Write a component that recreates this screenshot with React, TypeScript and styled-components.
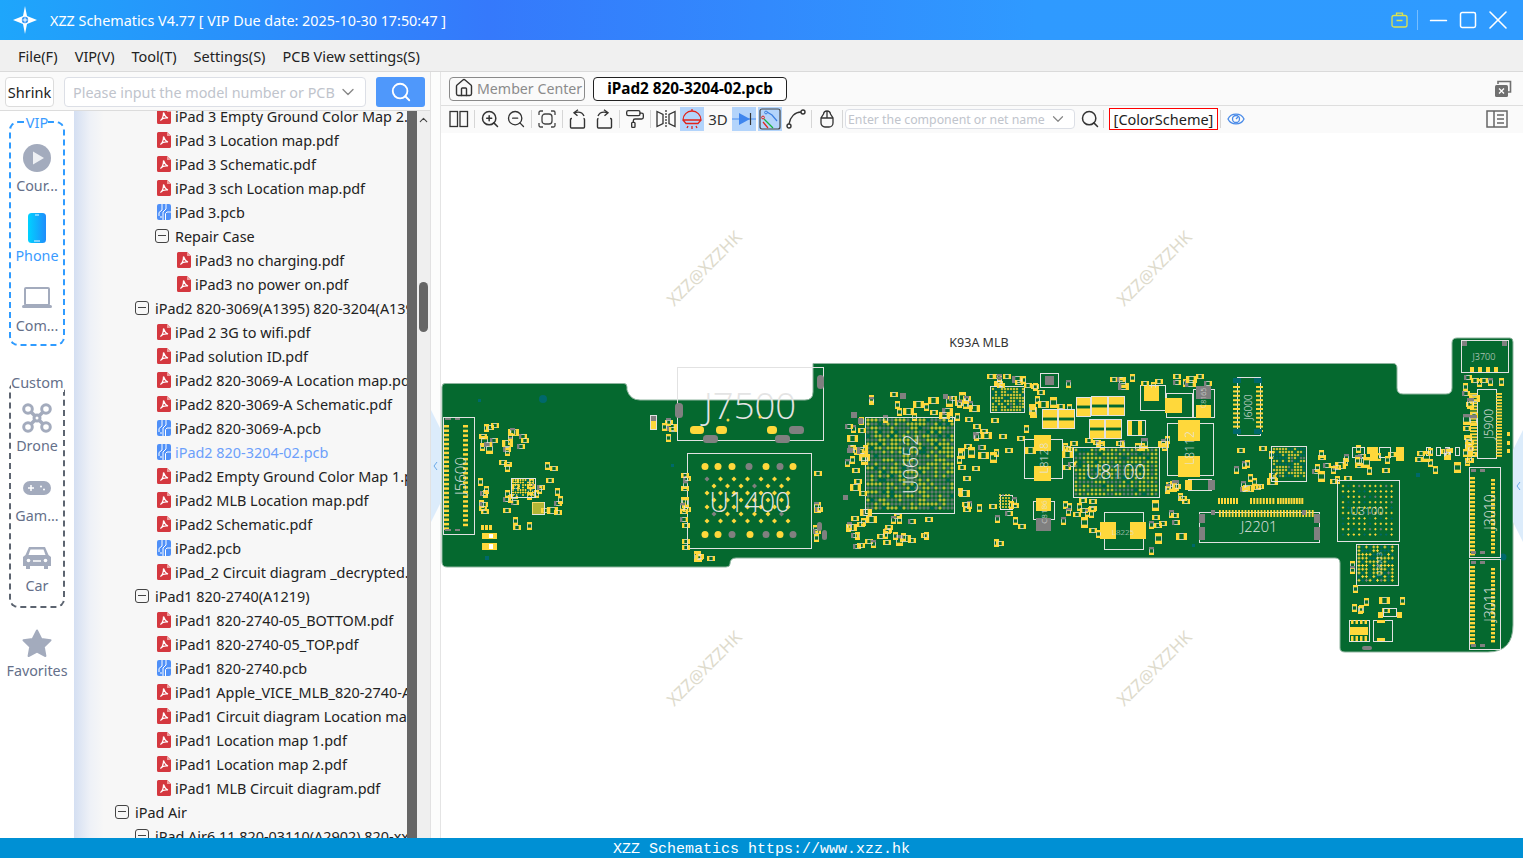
import React from 'react';
import styled, { createGlobalStyle } from 'styled-components';
import { ChevronDown, ChevronUp, House, Minus, Search, Square, X, ZoomIn, ZoomOut, PaintRoller } from 'lucide-react';

const UI_FONT = '"Noto Sans", "Noto Sans CJK SC", sans-serif';

const GlobalStyle = createGlobalStyle`
  html, body { margin: 0; height: 100%; overflow: hidden; }
  body { font-family: ${UI_FONT}; color: #222; background: #fff; }
  * { box-sizing: border-box; }
`;

const Page = styled.div`
  width: 100vw;
  height: 100vh;
  display: flex;
  flex-direction: column;
  overflow: hidden;
`;

/* title bar */
const TitleBar = styled.header`
  height: 40px;
  flex: none;
  display: flex;
  align-items: center;
  padding-left: 12px;
  color: #fff;
  background: linear-gradient(90deg, #1ea6fb 0%, #3579fb 32%, #2f9aff 68%, #2f9bff 100%);
`;
const TitleText = styled.div`
  margin-left: 12px;
  font-size: 14.35px;
  white-space: nowrap;
`;
const WindowControls = styled.div`
  margin-left: auto;
  display: flex;
  align-items: center;
  padding-right: 10px;
`;
const WindowDivider = styled.span`
  width: 1px;
  height: 20px;
  margin: 0 5px 0 9px;
  background: rgba(255, 255, 255, 0.35);
`;
const WindowButton = styled.span`
  width: 30px;
  display: flex;
  justify-content: center;
  svg { flex: none; }
`;

/* menu */
const MenuBar = styled.nav`
  height: 32px;
  flex: none;
  display: flex;
  align-items: center;
  gap: 17px;
  padding: 1px 0 0 18px;
  background: #f0f0f0;
  border-bottom: 1px solid #dadada;
  font-size: 14.5px;
`;
const MenuItem = styled.span`
  white-space: nowrap;
`;

const Body = styled.div`
  flex: 1;
  min-height: 0;
  display: flex;
`;

/* left panel */
const LeftPanel = styled.aside`
  width: 431px;
  flex: none;
  display: flex;
  flex-direction: column;
  border-right: 1px solid #e2e2e2;
  background: #fff;
`;
const SearchRow = styled.div`
  height: 39px;
  flex: none;
  display: flex;
  align-items: flex-start;
  padding: 5px 0 0 5px;
  background: #fafafa;
  border-bottom: 1px solid #dcdcdc;
`;
const ShrinkButton = styled.div`
  width: 49px;
  height: 30px;
  border: 1px solid #dcdcdc;
  border-radius: 4px;
  background: #fff;
  font-size: 14.5px;
  line-height: 28px;
  text-align: center;
`;
const Combo = styled.div<{ $w: number; $h: number; $size: number }>`
  width: ${(p) => p.$w}px;
  height: ${(p) => p.$h}px;
  flex: none;
  display: flex;
  align-items: center;
  justify-content: space-between;
  padding: 0 7px 0 ${(p) => (p.$size > 13 ? 8 : 2)}px;
  border: 1px solid #dcdfe6;
  border-radius: 4px;
  background: #fff;
  color: #c0c4cc;
  font-size: ${(p) => p.$size}px;
  white-space: nowrap;
  overflow: hidden;
`;
const SearchCombo = styled(Combo)`
  margin-left: 10px;
`;
const SearchButton = styled.div`
  width: 49px;
  height: 30px;
  margin-left: 10px;
  display: flex;
  align-items: center;
  justify-content: center;
  border-radius: 3px;
  background: #4f98fb;
`;
const PanelBody = styled.div`
  flex: 1;
  min-height: 0;
  display: flex;
`;

/* category rail */
const Rail = styled.div`
  width: 74px;
  flex: none;
  padding: 1px 0 0 9px;
  background: #fff;
`;
const RailGroup = styled.fieldset<{ $color: string; $h: number; $gap: number }>`
  width: 56px;
  min-width: 0;
  height: ${(p) => p.$h}px;
  margin: 0 0 ${(p) => p.$gap}px;
  padding: 0;
  border: 2px dashed ${(p) => p.$color};
  border-radius: 9px;
`;
const RailLegend = styled.legend<{ $color: string }>`
  margin: 0 auto;
  padding: 0;
  font-size: 14.5px;
  line-height: 20px;
  color: ${(p) => p.$color};
`;
const RailItem = styled.div<{ $active?: boolean }>`
  height: 70px;
  width: 52px;
  padding-bottom: 6px;
  display: flex;
  flex-direction: column;
  align-items: center;
  justify-content: flex-end;
  color: ${(p) => (p.$active ? '#3a9bff' : '#65708a')};
  font-size: 14.3px;
  line-height: 20px;
  white-space: nowrap;
`;
const RailIcon = styled.div`
  height: 34px;
  margin-bottom: 1px;
  display: flex;
  align-items: center;
  justify-content: center;
`;
const FavoriteItem = styled(RailItem)`
  width: 56px;
  margin-top: -18px;
`;

/* file tree */
const Tree = styled.div`
  flex: 1;
  min-width: 0;
  overflow: hidden;
  background: linear-gradient(90deg, #d4dff2 0, #eef1f7 16px, #f7f7f7 30px);
`;
const TreeInner = styled.div`
  margin-top: -7px;
`;
const Row = styled.div<{ $pad: number; $selected?: boolean }>`
  height: 24px;
  display: flex;
  align-items: center;
  padding-left: ${(p) => p.$pad}px;
  color: ${(p) => (p.$selected ? '#6c9ffb' : '#222')};
  font-size: 14.42px;
  white-space: nowrap;
`;
const FileIconBox = styled.span`
  width: 14px;
  height: 16px;
  margin-right: 4px;
  flex: none;
  display: flex;
`;
const Collapse = styled.span`
  width: 14px;
  height: 14px;
  margin-right: 6px;
  flex: none;
  position: relative;
  border: 1px solid #444;
  border-radius: 3px;
  &::after {
    content: '';
    position: absolute;
    left: 2px;
    right: 2px;
    top: 5px;
    height: 1px;
    background: #444;
  }
`;
const HandleBar = styled.div`
  width: 10px;
  flex: none;
  background: #666;
`;
const ScrollTrack = styled.div`
  width: 13px;
  flex: none;
  position: relative;
  background: #efefef;
  display: flex;
  justify-content: center;
  padding-top: 2px;
`;
const ScrollThumb = styled.div`
  position: absolute;
  top: 171px;
  left: 2px;
  width: 9px;
  height: 50px;
  border-radius: 5px;
  background: #666;
`;

const Splitter = styled.div`
  width: 10px;
  flex: none;
  position: relative;
  background: #fcfdfc;
  border-right: 1px solid #e4e4e4;
`;
const SideHandle = styled.div<{ $right?: boolean }>`
  position: absolute;
  top: ${(p) => (p.$right ? 297 : 338)}px;
  ${(p) => (p.$right ? 'right: 0;' : 'left: 0;')}
  width: 10px;
  height: 112px;
  display: flex;
  align-items: center;
  justify-content: center;
`;

/* main view */
const Main = styled.main`
  flex: 1;
  min-width: 0;
  display: flex;
  flex-direction: column;
  background: #fff;
`;
const TabBar = styled.div`
  height: 34px;
  flex: none;
  display: flex;
  align-items: flex-start;
  gap: 8px;
  padding: 5px 11px 0 8px;
  background: #fafafa;
  border-bottom: 1px solid #dedede;
`;
const Tab = styled.div<{ $active?: boolean }>`
  height: 24px;
  padding-bottom: 2px;
  display: flex;
  align-items: center;
  justify-content: ${(p) => (p.$active ? 'center' : 'flex-start')};
  width: ${(p) => (p.$active ? 194 : 136)}px;
  padding-left: ${(p) => (p.$active ? 0 : 4)}px;
  border: 1px solid ${(p) => (p.$active ? '#222' : '#8a8a8a')};
  border-radius: 4px;
  background: ${(p) => (p.$active ? '#fff' : '#fafafa')};
  color: ${(p) => (p.$active ? '#000' : '#8b8b8b')};
  font-size: ${(p) => (p.$active ? 15.3 : 14.2)}px;
  font-weight: ${(p) => (p.$active ? 700 : 400)};
  white-space: nowrap;
`;
const TabIcon = styled.span`
  margin-right: 3px;
  color: #333;
  display: flex;
`;
const CloseAll = styled.span`
  margin-left: auto;
  margin-top: 3px;
  display: flex;
`;
const Toolbar = styled.div`
  height: 27px;
  flex: none;
  display: flex;
  align-items: center;
  padding: 0 0 1px 5px;
  background: #fafafa;
`;
const ToolButton = styled.span<{ $on?: boolean }>`
  width: 24px;
  height: 24px;
  margin: 0 1px;
  flex: none;
  display: flex;
  align-items: center;
  justify-content: center;
  background: ${(p) => (p.$on ? '#b3d4fb' : 'transparent')};
  color: #333;
  font-size: 15px;
`;
const NetSearch = styled(ToolButton)`
  margin: 0 -1px 0 3px;
`;
const ToolDivider = styled.span`
  width: 1px;
  height: 18px;
  margin: 0 2px;
  flex: none;
  background: #d6d6d6;
`;
const ColorScheme = styled.div`
  width: 109px;
  height: 22px;
  margin-left: 3px;
  flex: none;
  border: 1px solid #f00;
  background: #fff;
  color: #222;
  font-size: 14.5px;
  line-height: 20px;
  text-align: center;
  white-space: nowrap;
`;
const ToolEnd = styled.span`
  margin-left: auto;
  margin-right: 15px;
  display: flex;
`;
const Canvas = styled.div`
  flex: 1;
  min-height: 0;
  position: relative;
  overflow: hidden;
  background: #fff;
`;
const BoardSvg = styled.svg`
  display: block;
  width: 100%;
  height: 100%;
`;

const Footer = styled.footer`
  height: 20px;
  flex: none;
  overflow: hidden;
  background: #0090d4;
  color: #fff;
  font-family: "Liberation Mono", "DejaVu Sans Mono", monospace;
  font-size: 15px;
  line-height: 23px;
  text-align: center;
  white-space: nowrap;
`;

/* ---------- icons ---------- */
const Logo = () => (
  <svg width="26" height="30" viewBox="0 0 26 30">
    <path d="M13 1 L15 11 L25 15 L15 19 L13 29 L11 19 L1 15 L11 11 Z" fill="#fff" />
    <circle cx="13" cy="15" r="3.2" fill="#3596f5" />
    <path d="M13 12.5v5M10.5 15h5" stroke="#fff" strokeWidth="1" />
  </svg>
);
const Bag = () => (
  <svg width="17" height="16" viewBox="0 0 17 16" fill="none" stroke="#dde24c" strokeWidth="1.3">
    <rect x="1" y="3.5" width="15" height="11.5" rx="2" />
    <path d="M5.5 3.5V1.2h6v2.3M5.5 8.5h6" />
  </svg>
);
const PdfIcon = () => (
  <svg width="14" height="16" viewBox="0 0 14 16">
    <path d="M1.5 0H10l4 4v10.5a1.5 1.5 0 0 1-1.5 1.5H1.5A1.5 1.5 0 0 1 0 14.5V1.5A1.5 1.5 0 0 1 1.5 0Z" fill="#d4383f" />
    <path d="M10 0l4 4h-4Z" fill="#f0a0a0" />
    <path d="M6.5 4.5c1 3 2 4.5 4.5 5.5-3-.5-5.5 0-7.5 2.5 2-1.5 3-4.5 3-8Z" fill="none" stroke="#fff" strokeWidth="1.2" />
  </svg>
);
const PcbIcon = () => (
  <svg width="14" height="16" viewBox="0 0 14 16">
    <rect width="14" height="16" rx="2" fill="#4f90f8" />
    <path d="M5 0v6L2 8.5V12M9 0v5l-3 3v8M14 8h-4L8.5 9.5V16M3 13h2" fill="none" stroke="#fff" strokeWidth="1" />
  </svg>
);
const PlayIcon = () => (
  <svg width="30" height="30" viewBox="0 0 30 30">
    <circle cx="15" cy="15" r="14" fill="#a3abbd" />
    <path d="M11 8.5 L22 15 L11 21.5 Z" fill="#eef0f4" />
  </svg>
);
const PhoneIcon = () => (
  <svg width="18" height="30" viewBox="0 0 18 30">
    <defs>
      <linearGradient id="ph" x1="0" x2="1" y1="0" y2="0">
        <stop offset="0" stopColor="#00d2ff" />
        <stop offset="1" stopColor="#1f8dfb" />
      </linearGradient>
    </defs>
    <rect width="18" height="30" rx="3.5" fill="url(#ph)" />
    <path d="M7 2h4M6 28h6" stroke="#e6f8ff" strokeWidth="1" />
  </svg>
);
const LaptopIcon = () => (
  <svg width="32" height="22" viewBox="0 0 32 22" fill="none">
    <rect x="4" y="1" width="24" height="17" rx="1" stroke="#a3abbd" strokeWidth="2" />
    <rect x="1" y="18" width="30" height="3" rx="1.5" fill="#a3abbd" />
  </svg>
);
const DroneIcon = () => (
  <svg width="30" height="30" viewBox="0 0 30 30" fill="none" stroke="#a3abbd">
    <circle cx="6" cy="6" r="4.3" strokeWidth="3" />
    <circle cx="24" cy="6" r="4.3" strokeWidth="3" />
    <circle cx="6" cy="24" r="4.3" strokeWidth="3" />
    <circle cx="24" cy="24" r="4.3" strokeWidth="3" />
    <path d="M9 9l12 12M21 9L9 21" strokeWidth="3.5" />
    <circle cx="15" cy="15" r="4.5" fill="#a3abbd" stroke="none" />
    <circle cx="15" cy="15" r="1.5" fill="#fff" stroke="none" />
  </svg>
);
const GameIcon = () => (
  <svg width="28" height="14" viewBox="0 0 28 14">
    <rect width="28" height="14" rx="7" fill="#a3abbd" />
    <path d="M5 7h6M8 4v6" stroke="#fff" strokeWidth="1.5" />
    <circle cx="18" cy="5.5" r="1" fill="#fff" />
    <circle cx="21" cy="8.5" r="1" fill="#fff" />
  </svg>
);
const CarIcon = () => (
  <svg width="28" height="24" viewBox="0 0 28 24">
    <path d="M6 1h16l3.5 8 2.5 2v9h-3v3h-4v-3H7v3H3v-3H0v-9l2.5-2Z" fill="#a3abbd" />
    <path d="M7.5 3.5h13l2 5.5h-17Z" fill="#fff" />
    <circle cx="5.5" cy="14.5" r="1.8" fill="#fff" />
    <circle cx="22.5" cy="14.5" r="1.8" fill="#fff" />
    <path d="M10 15h8" stroke="#fff" strokeWidth="1.5" />
  </svg>
);
const StarIcon = () => (
  <svg width="30" height="29" viewBox="0 0 30 29">
    <path d="M15 1.5 L19.3 10 L28.5 11.3 L21.8 17.8 L23.4 27 L15 22.7 L6.6 27 L8.2 17.8 L1.5 11.3 L10.7 10 Z" fill="#a3abbd" stroke="#a3abbd" strokeWidth="2" strokeLinejoin="round" />
  </svg>
);
const PanesIcon = () => (
  <svg width="20" height="18" viewBox="0 0 20 18" fill="none" stroke="#333" strokeWidth="1.3">
    <rect x="1" y="1.5" width="7.5" height="15" />
    <rect x="11" y="1.5" width="7.5" height="15" />
  </svg>
);
const FitIcon = () => (
  <svg width="18" height="18" viewBox="0 0 18 18" fill="none" stroke="#444" strokeWidth="1.3">
    <path d="M1 5V2.5A1.5 1.5 0 0 1 2.5 1H5M13 1h2.5A1.5 1.5 0 0 1 17 2.5V5M17 13v2.5a1.5 1.5 0 0 1-1.5 1.5H13M5 17H2.5A1.5 1.5 0 0 1 1 15.5V13" />
    <rect x="4" y="4" width="10" height="10" rx="3" />
  </svg>
);
const RotateIcon = ({ flip }: { flip?: boolean }) => (
  <svg width="18" height="20" viewBox="0 0 18 20" fill="none" stroke="#333" strokeWidth="1.4" style={flip ? { transform: 'scaleX(-1)' } : undefined}>
    <path d="M3 9.5H2.5A1 1 0 0 0 1.5 10.5V18A1 1 0 0 0 2.5 19H14.5A1 1 0 0 0 15.5 18V10.500A1 1 0 0 0 14.5 9.500" />
    <path d="M15 7C13.5 3.5 10 2.5 6 3.500" />
    <path d="M9 .8L5 3.8 8.500 6.800" />
  </svg>
);
const MirrorIcon = () => (
  <svg width="20" height="18" viewBox="0 0 20 18" fill="none" stroke="#333" strokeWidth="1.3">
    <path d="M1 1.5l6 3v9l-6 3ZM19 1.5l-6 3v9l6 3Z" />
    <path d="M10 0v18" strokeDasharray="2 1" />
  </svg>
);
const LampIcon = () => (
  <svg width="22" height="22" viewBox="0 0 22 22" fill="none" stroke="#e2231a" strokeWidth="1.3">
    <path d="M2 12a9 9 0 0 1 18 0ZM2 12l3 3.5h12l3-3.5" />
    <path d="M11 1v2M7 18l-1 2M11 18v3M15 18l1 2" />
  </svg>
);
const DiodeIcon = () => (
  <svg width="24" height="16" viewBox="0 0 24 16">
    <path d="M0 8h24" stroke="#4a8ff0" strokeWidth="1" />
    <path d="M7 2l11 6-11 6Z" fill="#3f86ee" />
    <path d="M18.5 2v12" stroke="#333" strokeWidth="1.2" />
  </svg>
);
const NetIcon = () => (
  <svg width="22" height="22" viewBox="0 0 22 22" fill="none">
    <rect x="1" y="1" width="20" height="20" rx="2" stroke="#444" strokeWidth="1.2" />
    <path d="M8 4l5 3 5 6" stroke="#3c7fe0" strokeWidth="1.2" />
    <circle cx="7" cy="4.5" r="1.4" stroke="#3c7fe0" />
    <path d="M5 11l9 9" stroke="#19b23a" strokeWidth="1.3" />
    <circle cx="4" cy="9.5" r="1.4" stroke="#e2231a" />
    <path d="M4 14l5 6" stroke="#e2231a" strokeWidth="1.2" />
  </svg>
);
const CurveIcon = () => (
  <svg width="20" height="20" viewBox="0 0 20 20" fill="none" stroke="#333" strokeWidth="1.4">
    <circle cx="3" cy="17" r="2" />
    <circle cx="17" cy="3" r="2" />
    <path d="M3 15C4 8 9 3 15 3" />
  </svg>
);
const MouseIcon = () => (
  <svg width="14" height="18" viewBox="0 0 14 18" fill="none" stroke="#333" strokeWidth="1.3">
    <path d="M3.5 4A3.500 3.500 0 0 1 7 1a3.500 3.500 0 0 1 3.500 3L13 8v5a4 4 0 0 1-4 4H5a4 4 0 0 1-4-4V8Z" />
    <path d="M1 8h12M7 1v7" />
  </svg>
);
const EyeIcon = () => (
  <svg width="18" height="14" viewBox="0 0 18 14" fill="none" stroke="#4a8be8" strokeWidth="1.3">
    <path d="M1 7c3-6.500 13-6.500 16 0-3 6.500-13 6.500-16 0Z" />
    <circle cx="9" cy="7" r="3.5" />
    <path d="M9 7l2-2" />
  </svg>
);
const SidePanelIcon = () => (
  <svg width="22" height="18" viewBox="0 0 22 18" fill="none" stroke="#666" strokeWidth="1.5">
    <rect x="1" y="1" width="20" height="16" />
    <path d="M8 1v16M11 5h7M11 9h7M11 13h7" />
  </svg>
);
const CloseAllIcon = () => (
  <svg width="18" height="18" viewBox="0 0 18 18">
    <path d="M4 4V1.5h12.5V12H14" fill="none" stroke="#707070" strokeWidth="1.6" />
    <rect x="1" y="5" width="13" height="12" rx="1.5" fill="#707070" />
    <path d="M5 8.5l5 5M10 8.5l-5 5" stroke="#fff" strokeWidth="1.3" />
  </svg>
);

/* ---------- tree data ---------- */
type TreeRow = { t: string; k: 'pdf' | 'pcb' | 'dir'; l: number; sel?: boolean };
const pdf = (t: string, l = 2): TreeRow => ({ t, k: 'pdf', l });
const pcb = (t: string, sel?: boolean): TreeRow => ({ t, k: 'pcb', l: 2, sel });
const dir = (t: string, l: number): TreeRow => ({ t, k: 'dir', l });

const rows: TreeRow[] = [
  pdf('iPad 3 Empty Ground Color Map 2.pdf'),
  pdf('iPad 3 Location map.pdf'),
  pdf('iPad 3 Schematic.pdf'),
  pdf('iPad 3 sch Location map.pdf'),
  pcb('iPad 3.pcb'),
  dir('Repair Case', 2),
  pdf('iPad3 no charging.pdf', 3),
  pdf('iPad3 no power on.pdf', 3),
  dir('iPad2 820-3069(A1395) 820-3204(A1396)', 1),
  pdf('iPad 2 3G to wifi.pdf'),
  pdf('iPad solution ID.pdf'),
  pdf('iPad2 820-3069-A Location map.pdf'),
  pdf('iPad2 820-3069-A Schematic.pdf'),
  pcb('iPad2 820-3069-A.pcb'),
  pcb('iPad2 820-3204-02.pcb', true),
  pdf('iPad2 Empty Ground Color Map 1.pdf'),
  pdf('iPad2 MLB Location map.pdf'),
  pdf('iPad2 Schematic.pdf'),
  pcb('iPad2.pcb'),
  pdf('iPad_2 Circuit diagram _decrypted.pdf'),
  dir('iPad1 820-2740(A1219)', 1),
  pdf('iPad1 820-2740-05_BOTTOM.pdf'),
  pdf('iPad1 820-2740-05_TOP.pdf'),
  pcb('iPad1 820-2740.pcb'),
  pdf('iPad1 Apple_VICE_MLB_820-2740-A.pdf'),
  pdf('iPad1 Circuit diagram Location map.pdf'),
  pdf('iPad1 Location map 1.pdf'),
  pdf('iPad1 Location map 2.pdf'),
  pdf('iPad1 MLB Circuit diagram.pdf'),
  dir('iPad Air', 0),
  dir('iPad Air6 11 820-03110(A2902) 820-xxxxx', 1),
];

/* ---------- board drawing ---------- */
const GREEN = '#05692f';
const YEL = '#ffd83b';
const GRY = '#808080';
const TEAL = '#00686b';
const LINE = '#e2e2e2';

const rng = (seed: number) => () => {
  seed = (seed * 1664525 + 1013904223) % 4294967296;
  return seed / 4294967296;
};

type R = [number, number, number, number];
const rects = (list: R[], fill: string, rx = 0) =>
  list.map(([x, y, w, h], i) => <rect key={i} x={x} y={y} width={w} height={h} rx={rx} fill={fill} />);
const boxes = (list: R[]) =>
  list.map(([x, y, w, h], i) => <rect key={i} x={x + 0.5} y={y + 0.5} width={w} height={h} fill="none" stroke={LINE} strokeWidth="1" />);

// pads in a line, same size
const padLine = (x: number, y: number, n: number, dx: number, dy: number, w: number, h: number): R[] =>
  Array.from({ length: n }, (_, i) => [x + i * dx, y + i * dy, w, h] as R);

// scattered two-pad parts inside a region
const cluster = (x0: number, y0: number, x1: number, y1: number, n: number, seed: number) => {
  const r = rng(seed);
  const out: React.ReactNode[] = [];
  for (let i = 0; i < n; i++) {
    const x = Math.round(x0 + r() * (x1 - x0));
    const y = Math.round(y0 + r() * (y1 - y0));
    const big = r() > 0.8;
    const w = big ? 10 : 7;
    const h = big ? 6 : 4;
    const vert = r() > 0.55;
    const gray = r() > 0.75;
    const W = vert ? h : w;
    const H = vert ? w : h;
    out.push(
      <g key={i}>
        <rect x={x + 0.5} y={y + 0.5} width={W} height={H} fill="none" stroke={LINE} strokeWidth="0.8" />
        <rect x={x} y={y} width={vert ? W + 1 : W / 3} height={vert ? H / 3 : H + 1} fill={gray ? GRY : YEL} />
        <rect
          x={vert ? x : x + W - W / 3 + 1}
          y={vert ? y + H - H / 3 + 1 : y}
          width={vert ? W + 1 : W / 3}
          height={vert ? H / 3 : H + 1}
          fill={YEL}
        />
      </g>
    );
  }
  return out;
};

// ball grid drawn as small crosses
const grid = (x0: number, y0: number, x1: number, y1: number, p: number, arm: number, mix: [number, number], seed: number) => {
  const r = rng(seed);
  const paths: Record<string, string> = { y: '', g: '', t: '' };
  for (let y = y0; y <= y1; y += p) {
    for (let x = x0; x <= x1; x += p) {
      const v = r();
      const k = v < mix[0] ? 'y' : v < mix[0] + mix[1] ? 'g' : 't';
      paths[k] += `M${x - arm} ${y}h${arm * 2}M${x} ${y - arm}v${arm * 2}`;
    }
  }
  return (
    <g fill="none" strokeWidth="1">
      <path d={paths.y} stroke={YEL} />
      <path d={paths.g} stroke={GRY} />
      <path d={paths.t} stroke={TEAL} />
    </g>
  );
};

// two-tone block part: outline, yellow ends and green band in the middle
const blockPart = ([x, y, w, h]: R, key: number) => (
  <g key={key}>
    <rect x={x} y={y} width={w} height={h} fill={YEL} />
    <rect x={x} y={y + h * 0.42} width={w} height={h * 0.16} fill={GREEN} />
    <rect x={x - 0.5} y={y - 0.5} width={w + 1} height={h + 1} fill="none" stroke={LINE} />
  </g>
);

const BOARD_PATH =
  'M445 383.5H624Q627 383.5 627 387V390Q630 400 640 400H805Q813 400 813 392V363.5H1393Q1397 363.5 1397 368V388Q1397 394 1403 394H1446Q1452 394 1452 388V343Q1452 338 1457 338H1510Q1513 338 1513 342V625Q1513 652 1488 652H1345Q1340 652 1340 648V563Q1340 558 1335 558H736Q730 558 730 564Q730 567 726 567H447Q442 567 442 562V387Q442 383.5 445 383.5Z';

const labelStyle = { fontFamily: '"Open Sans", "Noto Sans", sans-serif', fill: '#e4e4e4', fontWeight: 300 } as const;

const Label = ({ x, y, size, rot, children }: { x: number; y: number; size: number; rot?: boolean; children: string }) => (
  <text
    x={x}
    y={y}
    fontSize={size}
    textAnchor="middle"
    dominantBaseline="central"
    transform={rot ? `rotate(-90 ${x} ${y})` : undefined}
    style={labelStyle}
  >
    {children}
  </text>
);

const Watermark = ({ x, y }: { x: number; y: number }) => (
  <text
    x={x}
    y={y}
    fontSize="17"
    textAnchor="middle"
    dominantBaseline="central"
    fill="#dedbcc"
    transform={`rotate(-45 ${x} ${y})`}
    style={{ fontFamily: '"Noto Sans", sans-serif' }}
  >
    XZZ@XZZHK
  </text>
);

const u1400Balls = () => {
  const big: [number, number, string][] = [];
  [705, 718, 732, 749, 766, 780, 793].forEach((x, i) => {
    big.push([x, 466.5, i === 3 || i === 5 ? GRY : YEL]);
    big.push([x + (i === 3 ? 1 : 0), 534.5, i === 2 || i === 4 || i === 6 ? GRY : YEL]);
  });
  const small: React.ReactNode[] = [];
  for (let row = 0; row < 7; row++) {
    const y = 479 + row * 7;
    const off = row % 2 ? 7 : 0;
    for (let c = 0; c < (row % 2 ? 6 : 7); c++) {
      const x = 707 + off + c * 13.5;
      const g = (row === 1 && c === 3) || (row === 0 && c === 0) || (row === 5 && c === 0) || (row === 5 && c === 5);
      small.push(<path key={`${row}-${c}`} d={`M${x} ${y - 2.5}L${x + 2.5} ${y}L${x} ${y + 2.5}L${x - 2.5} ${y}Z`} fill={g ? GRY : YEL} />);
    }
  }
  return (
    <>
      {big.map(([x, y, c], i) => (
        <circle key={i} cx={x} cy={y} r="3.5" fill={c} />
      ))}
      {small}
    </>
  );
};

const Board = () => (
  <BoardSvg viewBox="441 133 1082 705" preserveAspectRatio="xMinYMin meet">
    <Watermark x={704} y={268} />
    <Watermark x={1154} y={268} />
    <Watermark x={704} y={668} />
    <Watermark x={1154} y={668} />
    <text x="979" y="347" fontSize="12.5" textAnchor="middle" fill="#333" style={{ fontFamily: UI_FONT }}>
      K93A MLB
    </text>

    <path d={BOARD_PATH} fill={GREEN} stroke="#8fb59f" strokeWidth="1" />

    {/* vias */}
    <circle cx="543" cy="399" r="4" fill={TEAL} />
    {rects([[478, 399, 3, 3], [671, 464, 3, 3], [485, 556, 4, 4], [1192, 544, 3, 3], [1416, 473, 4, 4]], TEAL)}
    <circle cx="1503" cy="557" r="3.5" fill={TEAL} />

    {/* J5600 */}
    {boxes([[443, 417, 31, 117]])}
    {rects(padLine(444, 425, 24, 0, 4.45, 5, 2.5), YEL)}
    {rects(padLine(463, 425, 22, 0, 4.7, 5, 2.5), YEL)}
    {rects([[445, 418, 6, 2], [455, 418, 5, 2], [445, 529, 6, 2], [455, 529, 5, 2]], GRY)}
    <Label x={460} y={476} size={15} rot>J5600</Label>

    {/* cluster around J5600 */}
    {cluster(478, 418, 492, 450, 9, 3)}
    {cluster(478, 472, 484, 510, 8, 5)}
    {cluster(500, 425, 522, 450, 10, 7)}
    {cluster(495, 460, 560, 525, 30, 11)}
    {boxes([[511, 478, 24, 19], [532, 502, 12, 12]])}
    {grid(513, 480, 534, 495, 2.5, 1, [0.75, 0.05], 13)}
    {grid(533, 503, 543, 513, 2, 0.9, [0.9, 0.05], 17)}
    {rects([[482, 533, 15, 6], [482, 543, 15, 7]], YEL)}
    {rects([[489, 534, 4, 4], [489, 544, 4, 5]], '#fff')}
    {rects([[481, 525, 3, 5], [485, 525, 3, 5], [489, 525, 3, 5]], YEL)}

    {/* J7500 */}
    {boxes([[677, 367, 146, 73]])}
    <Label x={750} y={405} size={36.5}>J7500</Label>
    {rects([[817, 375, 7, 14], [675, 403, 8, 15], [703, 435, 15, 8], [775, 435, 15, 8], [789, 426, 15, 8]], GRY, 3.5)}
    {rects([[690, 426, 14, 8], [716, 426, 11, 8], [767, 426, 10, 8]], YEL, 3.5)}
    <circle cx="728" cy="420" r="1.5" fill={YEL} />
    <circle cx="760" cy="417" r="1.5" fill={YEL} />
    {rects([[651, 416, 5, 5]], GRY)}
    {rects([[650, 421, 6, 8]], YEL)}
    {boxes([[650, 415, 6, 14]])}
    {cluster(661, 416, 676, 436, 6, 21)}

    {/* U1400 */}
    {boxes([[687, 453, 124, 95]])}
    {u1400Balls()}
    <Label x={750} y={501} size={27}>U1400</Label>
    {cluster(680, 452, 684, 545, 14, 23)}
    {cluster(813, 462, 816, 536, 7, 25)}
    {cluster(693, 550, 710, 556, 5, 27)}
    {rects([[817, 522, 5, 9], [822, 530, 5, 10]], GRY, 2.5)}

    {/* U0652 */}
    {boxes([[865, 417, 89, 96]])}
    {grid(868, 420, 952, 511, 4, 1.7, [0.42, 0.5], 31)}
    <Label x={910} y={464} size={20} rot>U0652</Label>
    {cluster(845, 410, 863, 540, 26, 33)}
    {cluster(868, 390, 978, 415, 26, 35)}
    {cluster(955, 417, 985, 510, 22, 37)}
    {cluster(845, 514, 925, 545, 26, 39)}
    {rects([[851, 412, 6, 6], [858, 418, 5, 6], [847, 448, 6, 5], [843, 495, 5, 5], [900, 393, 6, 6], [943, 394, 5, 5]], GRY)}

    {/* small IC row top middle */}
    {boxes([[990, 386, 34, 26], [1040, 373, 18, 14]])}
    {grid(993, 389, 1023, 410, 3, 1.2, [0.75, 0.05], 41)}
    <rect x="1045" y="376" width="9" height="9" fill={GRY} />
    {cluster(980, 372, 1037, 384, 12, 43)}
    {cluster(1023, 380, 1078, 408, 12, 45)}
    {cluster(990, 412, 1025, 452, 8, 47)}
    {boxes([[1000, 495, 12, 14]])}
    {grid(1000, 495, 1011, 508, 3, 1, [0.7, 0.1], 49)}
    {cluster(985, 482, 1020, 545, 10, 51)}

    {/* L8128 / C8186 */}
    {boxes([[1024, 439, 38, 39], [1033, 501, 21, 18]])}
    {rects([[1034, 435, 17, 16], [1034, 466, 17, 15], [1036, 498, 15, 13]], YEL)}
    <rect x="1036" y="518" width="15" height="13" fill={GRY} />
    <Label x={1043} y={458} size={11} rot>L8128</Label>
    <Label x={1043} y={512} size={8} rot>C8186</Label>
    {cluster(1060, 440, 1072, 470, 7, 53)}
    {cluster(1056, 498, 1100, 518, 14, 55)}

    {/* power block */}
    {[[1077, 398, 13, 18], [1092, 397, 15, 18], [1109, 397, 15, 18], [1043, 410, 14, 18], [1059, 410, 15, 18], [1090, 420, 14, 18], [1106, 420, 15, 18]].map((r, i) =>
      blockPart(r as R, i)
    )}
    {boxes([[1127, 420, 18, 15], [1140, 385, 25, 25], [1166, 393, 26, 24], [1193, 389, 21, 28]])}
    {rects([[1144, 386, 15, 15], [1165, 398, 17, 15], [1196, 405, 15, 13], [1128, 421, 4, 14], [1138, 421, 4, 14]], YEL)}
    <rect x="1196" y="386" width="15" height="13" fill={GRY} />
    <Label x={1203} y={398} size={7} rot>C8165</Label>
    {cluster(1105, 372, 1160, 384, 8, 57)}
    {cluster(1172, 372, 1215, 383, 7, 59)}
    {cluster(1075, 436, 1170, 444, 14, 61)}

    {/* U8100 */}
    {boxes([[1073, 447, 86, 50]])}
    {grid(1076, 450, 1157, 495, 4, 1.4, [0.5, 0.4], 63)}
    <Label x={1116} y={471} size={20}>U8100</Label>

    {/* L8112 */}
    {boxes([[1167, 423, 46, 52]])}
    {rects([[1178, 420, 22, 21], [1178, 456, 22, 21]], YEL)}
    <Label x={1189} y={448} size={12} rot>L8112</Label>
    {boxes([[1188, 479, 23, 11]])}
    {rects([[1185, 480, 7, 10]], YEL)}
    {rects([[1208, 480, 7, 10]], GRY)}
    {cluster(1160, 478, 1182, 500, 8, 65)}

    {/* L8225 */}
    {boxes([[1104, 512, 39, 37]])}
    {rects([[1100, 522, 16, 17], [1130, 522, 16, 17]], YEL)}
    <Label x={1123} y={531} size={8}>L8225</Label>
    {cluster(1145, 495, 1180, 548, 12, 69)}
    {cluster(1085, 523, 1100, 530, 2, 71)}

    {/* J6000 */}
    {boxes([[1237, 377, 23, 58]])}
    {rects(padLine(1233, 386, 11, 0, 4.4, 7, 2), YEL)}
    {rects(padLine(1256, 386, 11, 0, 4.4, 7, 2), YEL)}
    {rects([[1233, 378, 8, 5], [1254, 378, 8, 5], [1233, 429, 8, 5], [1254, 429, 8, 5]], TEAL)}
    <Label x={1248} y={407} size={10} rot>J6000</Label>

    {/* right middle strip */}
    {cluster(1233, 445, 1270, 490, 16, 73)}
    {boxes([[1271, 446, 35, 35], [1352, 447, 12, 10], [1379, 447, 11, 10], [1426, 447, 4, 8], [1436, 447, 4, 8], [1445, 447, 4, 8], [1455, 447, 4, 8]])}
    {grid(1274, 449, 1304, 478, 3, 1.2, [0.5, 0.1], 75)}
    {cluster(1308, 446, 1345, 480, 14, 77)}
    {cluster(1350, 445, 1400, 472, 12, 79)}
    {cluster(1412, 446, 1470, 466, 14, 81)}
    {rects([[1370, 447, 8, 14], [1396, 447, 8, 14]], YEL)}

    {/* J2201 */}
    {boxes([[1199, 512, 120, 30]])}
    <Label x={1259} y={526} size={14.5}>J2201</Label>
    {rects(padLine(1219, 510, 30, 3.2, 0, 1.8, 7), YEL)}
    {rects(padLine(1218, 498, 7, 3, 0, 2, 6), YEL)}
    {rects(padLine(1250, 498, 8, 3.2, 0, 2, 6), YEL)}
    {rects(padLine(1277, 498, 10, 2.7, 0, 2, 6), YEL)}
    {rects([[1199, 514, 6, 9], [1314, 514, 6, 9], [1199, 527, 6, 13], [1314, 527, 6, 13], [1211, 510, 4, 5], [1302, 510, 4, 5]], GRY)}

    {/* U3100 */}
    {boxes([[1337, 480, 62, 61]])}
    {grid(1343, 486, 1393, 535, 5.4, 1.2, [0.72, 0.06], 83)}
    <Label x={1367} y={510} size={11}>U3100</Label>

    {/* U3003 */}
    {boxes([[1356, 544, 42, 41]])}
    {grid(1359, 547, 1396, 583, 3.7, 1.5, [0.55, 0.03], 85)}
    <Label x={1378} y={564} size={8} rot>U3003</Label>
    {cluster(1348, 555, 1355, 590, 3, 87)}
    {cluster(1350, 590, 1400, 612, 7, 89)}

    {/* bottom small parts */}
    {boxes([[1349, 620, 20, 21], [1373, 620, 19, 21], [1383, 608, 13, 8]])}
    {rects([[1350, 627, 18, 8], [1377, 620, 8, 3], [1377, 638, 8, 3], [1378, 612, 5, 6], [1397, 612, 5, 6]], YEL)}
    {rects(padLine(1351, 620, 4, 4.5, 0, 2.5, 4), YEL)}
    {rects(padLine(1351, 636, 4, 4.5, 0, 2.5, 5), YEL)}
    <rect x="1362" y="646" width="10" height="4" rx="2" fill={GRY} />

    {/* J3700 */}
    {boxes([[1461, 340, 47, 32]])}
    {rects([[1462, 341, 5, 5], [1502, 341, 5, 5]], GRY)}
    {rects(padLine(1470, 367, 4, 8, 0, 4, 5), YEL)}
    <Label x={1484} y={356} size={9}>J3700</Label>
    {cluster(1460, 375, 1502, 380, 6, 91)}

    {/* J5900 */}
    {boxes([[1477, 389, 19, 69]])}
    {rects(padLine(1470, 393, 21, 0, 3.1, 7, 1.8), YEL)}
    {rects(padLine(1496, 393, 21, 0, 3.1, 6, 1.8), YEL)}
    <Label x={1488} y={424} size={12} rot>J5900</Label>
    {cluster(1462, 382, 1470, 456, 20, 93)}
    {rects([[1507, 432, 3, 4], [1507, 441, 3, 4], [1507, 449, 3, 4]], YEL)}

    {/* J3010 / J3011 */}
    {boxes([[1469, 467, 31, 90], [1469, 559, 31, 90]])}
    {rects(padLine(1470, 477, 20, 0, 4, 5, 2.4), YEL)}
    {rects(padLine(1491, 479, 19, 0, 4, 4, 2.4), YEL)}
    {rects(padLine(1470, 566, 20, 0, 4, 5, 2.4), YEL)}
    {rects(padLine(1491, 568, 19, 0, 4, 4, 2.4), YEL)}
    {rects([[1471, 469, 5, 3], [1480, 469, 5, 3], [1471, 551, 5, 3], [1480, 551, 5, 3], [1471, 561, 5, 3], [1480, 561, 5, 3], [1471, 644, 5, 3], [1480, 644, 5, 3]], GRY)}
    <Label x={1489} y={512} size={14} rot>J3010</Label>
    <Label x={1489} y={604} size={14} rot>J3011</Label>
  </BoardSvg>
);

const App = () => (
  <Page>
    <GlobalStyle />
    <TitleBar>
      <Logo />
      <TitleText>XZZ Schematics V4.77 [ VIP Due date: 2025-10-30 17:50:47 ]</TitleText>
      <WindowControls>
        <Bag />
        <WindowDivider />
        <WindowButton><Minus size={27} strokeWidth={1.5} /></WindowButton>
        <WindowButton><Square size={20} strokeWidth={1.8} /></WindowButton>
        <WindowButton><X size={32} strokeWidth={1.2} /></WindowButton>
      </WindowControls>
    </TitleBar>
    <MenuBar>
      {['File(F)', 'VIP(V)', 'Tool(T)', 'Settings(S)', 'PCB View settings(S)'].map((m) => (
        <MenuItem key={m}>{m}</MenuItem>
      ))}
    </MenuBar>
    <Body>
      <LeftPanel>
        <SearchRow>
          <ShrinkButton>Shrink</ShrinkButton>
          <SearchCombo $w={302} $h={30} $size={14.35}>
            Please input the model number or PCB
            <ChevronDown size={20} color="#888" strokeWidth={1.6} />
          </SearchCombo>
          <SearchButton><Search size={22} color="#fff" strokeWidth={2} /></SearchButton>
        </SearchRow>
        <PanelBody>
          <Rail>
            <RailGroup $color="#2f9bff" $h={234} $gap={26}>
              <RailLegend $color="#3a9bff">VIP</RailLegend>
              <RailItem><RailIcon><PlayIcon /></RailIcon>Cour...</RailItem>
              <RailItem $active><RailIcon><PhoneIcon /></RailIcon>Phone</RailItem>
              <RailItem><RailIcon><LaptopIcon /></RailIcon>Com...</RailItem>
            </RailGroup>
            <RailGroup $color="#5c6470" $h={236} $gap={27}>
              <RailLegend $color="#65708a">Custom</RailLegend>
              <RailItem><RailIcon><DroneIcon /></RailIcon>Drone</RailItem>
              <RailItem><RailIcon><GameIcon /></RailIcon>Gam...</RailItem>
              <RailItem><RailIcon><CarIcon /></RailIcon>Car</RailItem>
            </RailGroup>
            <FavoriteItem><RailIcon><StarIcon /></RailIcon>Favorites</FavoriteItem>
          </Rail>
          <Tree>
            <TreeInner>
              {rows.map((r) =>
                r.k === 'dir' ? (
                  <Row key={r.t} $pad={41 + 20 * r.l}>
                    <Collapse />
                    {r.t}
                  </Row>
                ) : (
                  <Row key={r.t} $pad={43 + 20 * r.l} $selected={r.sel}>
                    <FileIconBox>{r.k === 'pdf' ? <PdfIcon /> : <PcbIcon />}</FileIconBox>
                    {r.t}
                  </Row>
                )
              )}
            </TreeInner>
          </Tree>
          <HandleBar />
          <ScrollTrack>
            <ChevronUp size={14} color="#444" />
            <ScrollThumb />
          </ScrollTrack>
        </PanelBody>
      </LeftPanel>
      <Splitter>
        <SideHandle>
          <svg width="10" height="112" viewBox="0 0 10 112">
            <path d="M0 0 L10 20 V92 L0 112 Z" fill="#dcecfb" />
            <path d="M6 52l-3 4 3 4" fill="none" stroke="#6aa9e8" strokeWidth="1" />
          </svg>
        </SideHandle>
      </Splitter>
      <Main>
        <TabBar>
          <Tab>
            <TabIcon><House size={20} strokeWidth={1.7} /></TabIcon>
            Member Center
          </Tab>
          <Tab $active>iPad2 820-3204-02.pcb</Tab>
          <CloseAll><CloseAllIcon /></CloseAll>
        </TabBar>
        <Toolbar>
          <ToolButton><PanesIcon /></ToolButton>
          <ToolDivider />
          <ToolButton><ZoomIn size={20} strokeWidth={1.8} /></ToolButton>
          <ToolButton><ZoomOut size={20} strokeWidth={1.6} /></ToolButton>
          <ToolDivider />
          <ToolButton><FitIcon /></ToolButton>
          <ToolDivider />
          <ToolButton><RotateIcon /></ToolButton>
          <ToolButton><RotateIcon flip /></ToolButton>
          <ToolDivider />
          <ToolButton><PaintRoller size={20} strokeWidth={1.6} /></ToolButton>
          <ToolDivider />
          <ToolButton><MirrorIcon /></ToolButton>
          <ToolButton $on><LampIcon /></ToolButton>
          <ToolButton>3D</ToolButton>
          <ToolButton $on><DiodeIcon /></ToolButton>
          <ToolButton $on><NetIcon /></ToolButton>
          <ToolButton><CurveIcon /></ToolButton>
          <ToolDivider />
          <ToolButton><MouseIcon /></ToolButton>
          <ToolDivider />
          <Combo $w={230} $h={20} $size={12.3}>
            Enter the component or net name
            <ChevronDown size={18} color="#888" strokeWidth={1.6} />
          </Combo>
          <NetSearch><Search size={20} strokeWidth={1.8} /></NetSearch>
          <ToolDivider />
          <ColorScheme>[ColorScheme]</ColorScheme>
          <ToolDivider />
          <ToolButton><EyeIcon /></ToolButton>
          <ToolEnd><SidePanelIcon /></ToolEnd>
        </Toolbar>
        <Canvas>
          <Board />
          <SideHandle $right>
            <svg width="10" height="112" viewBox="0 0 10 112">
              <path d="M10 0 L0 20 V92 L10 112 Z" fill="#dcecfb" />
              <path d="M7 52l-3 4 3 4" fill="none" stroke="#6aa9e8" strokeWidth="1" />
            </svg>
          </SideHandle>
        </Canvas>
      </Main>
    </Body>
    <Footer>XZZ Schematics https://www.xzz.hk</Footer>
  </Page>
);

export default App;
